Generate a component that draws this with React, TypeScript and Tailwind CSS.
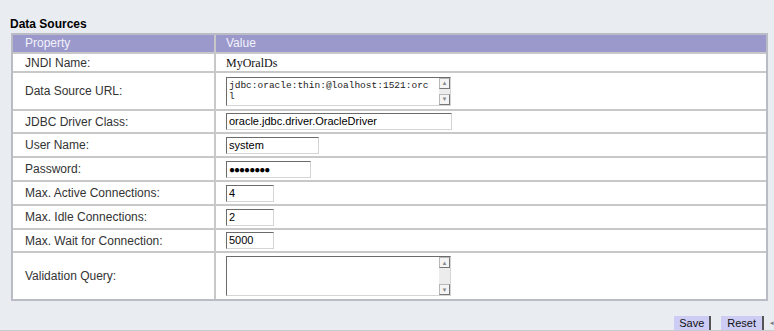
const font = { fontFamily: '"Liberation Sans", Arial, sans-serif' };

const Inset = ({ w, h = 'h-[17px]', children }: { w: string; h?: string; children?: React.ReactNode }) => (
  <div
    className={`${w} ${h} bg-white border border-t-[#6b6b6b] border-l-[#6b6b6b] border-r-[#d4d4d4] border-b-[#d4d4d4] text-[11px] leading-[15px] pl-[2px] text-black overflow-hidden`}
  >
    {children}
  </div>
);

const ScrollArea = ({ h, children }: { h: string; children?: React.ReactNode }) => (
  <div
    className={`w-[225px] ${h} bg-white border border-t-[#6b6b6b] border-l-[#6b6b6b] border-r-[#d4d4d4] border-b-[#d4d4d4] flex`}
  >
    <div className="flex-1 px-[2px] pt-[2px] text-[9.5px] leading-[11px] text-[#222] whitespace-nowrap overflow-hidden" style={{ fontFamily: '"Liberation Mono", "Courier New", monospace' }}>
      {children}
    </div>
    <div className="w-[11px] bg-[#ececec] flex flex-col justify-between">
      <div className="h-[11px] bg-[#f4f4f4] border border-[#b8b8b8] border-r-[#777] border-b-[#777] flex items-center justify-center text-[6px] leading-none text-[#888]">▲</div>
      <div className="h-[11px] bg-[#f4f4f4] border border-[#b8b8b8] border-r-[#777] border-b-[#777] flex items-center justify-center text-[6px] leading-none text-[#888]">▼</div>
    </div>
  </div>
);

const data = [
  { label: 'JNDI Name:', h: 'h-[17px]', value: <span className="text-[12px] text-[#111]" style={{ fontFamily: '"Liberation Serif", "Times New Roman", serif' }}>MyOralDs</span> },
  { label: 'Data Source URL:', h: 'h-[36px]', value: <ScrollArea h="h-[29px]">jdbc:oracle:thin:@loalhost:1521:orc<br />l</ScrollArea> },
  { label: 'JDBC Driver Class:', h: 'h-[21px]', value: <Inset w="w-[226px]">oracle.jdbc.driver.OracleDriver</Inset> },
  { label: 'User Name:', h: 'h-[22px]', value: <Inset w="w-[93px]">system</Inset> },
  { label: 'Password:', h: 'h-[22px]', value: <Inset w="w-[85px]"><span className="text-[10px] tracking-[-1px]">●●●●●●●●</span></Inset> },
  { label: 'Max. Active Connections:', h: 'h-[22px]', value: <Inset w="w-[48px]">4</Inset> },
  { label: 'Max. Idle Connections:', h: 'h-[22px]', value: <Inset w="w-[48px]">2</Inset> },
  { label: 'Max. Wait for Connection:', h: 'h-[21px]', value: <Inset w="w-[48px]">5000</Inset> },
  { label: 'Validation Query:', h: 'h-[46px]', value: <ScrollArea h="h-[40px]" /> },
];

export default function App() {
  return (
    <div className="w-[774px] h-[331px] bg-[#e9ecf1] relative overflow-hidden" style={font}>
      <div className="pl-[10px] pt-[15px] h-[33px] text-[12px] font-bold text-black">Data Sources</div>
      <div className="ml-[11px] mr-[6px] border-2 border-[#b9bcc4] bg-white">
        <div className="grid grid-cols-[203px_1fr] h-[17px] bg-[#9b99cc] text-[12px] leading-[17px] text-[#f2f2fa] border-b-2 border-[#c8c8c8] box-content">
          <div className="pl-[12px] border-r-2 border-[#c8c8c8]">Property</div>
          <div className="pl-[10px]">Value</div>
        </div>
        {data.map((r, i) => (
          <div
            key={r.label}
            className={`grid grid-cols-[203px_1fr] ${r.h} box-content ${i < data.length - 1 ? 'border-b-2 border-[#c8c8c8]' : ''}`}
          >
            <div className="pl-[12px] border-r-2 border-[#c8c8c8] flex items-center text-[12px] text-[#333]">{r.label}</div>
            <div className="pl-[10px] flex items-center">{r.value}</div>
          </div>
        ))}
      </div>
      <div className="absolute right-[10px] bottom-0 flex gap-[10px]">
        <button className="h-[15px] px-[5px] bg-[#ccccf5] border-r-2 border-[#555] text-[11px] leading-[15px] text-[#111]">Save</button>
        <button className="h-[15px] px-[6px] bg-[#ccccf5] border-r-2 border-[#555] text-[11px] leading-[15px] text-[#111]">Reset</button>
      </div>
      <div className="absolute right-0 bottom-[3px] text-[7px] text-[#777]">◂</div>
      <div className="absolute left-0 right-0 bottom-0 h-px bg-[#c8cbd2]" />
    </div>
  );
}
